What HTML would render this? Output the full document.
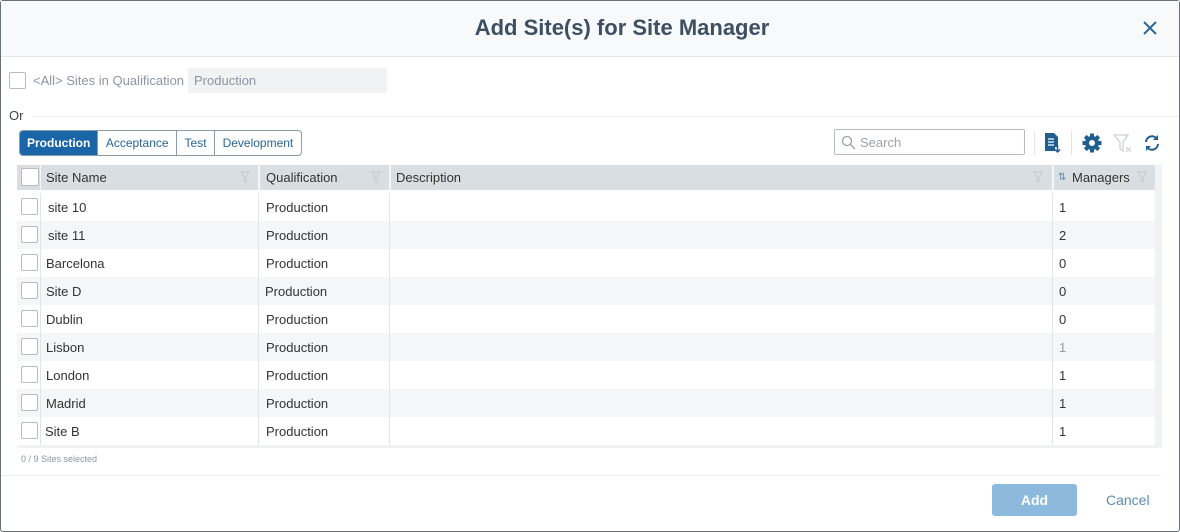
<!DOCTYPE html>
<html><head><meta charset="utf-8"><style>
*{box-sizing:border-box;margin:0;padding:0}
body{width:1180px;height:532px;overflow:hidden;background:#fff;font-family:"Liberation Sans",sans-serif;color:#333;position:relative}
.frame{position:absolute;left:0;top:0;width:1180px;height:532px;border:1px solid #6b7178;border-radius:3px}
.hdr{position:absolute;left:1px;top:1px;width:1178px;height:56px;background:#f7f9fa;border-bottom:1px solid #e6e9ec}
.title{position:absolute;left:0;width:1244px;top:15px;text-align:center;font-size:22px;font-weight:bold;color:#3d4f61}
.abs{position:absolute}
.cb{position:absolute;width:17px;height:17px;border:1px solid #b5bcc3;background:#fff;border-radius:2px}
.tabs{position:absolute;left:19px;top:130px;height:26px;border:1px solid #8a9ba9;border-radius:4px;display:flex;overflow:hidden;font-size:12px}
.tabs div{padding:0 7.5px;line-height:24px;color:#2a6496;border-left:1px solid #8a9ba9}
.tabs div:first-child{border-left:none;background:#1a65a8;color:#fff;font-weight:bold;padding:0 7px}
.th{position:absolute;top:165px;height:25px;background:#d9dee3;font-size:13px;color:#333;line-height:25px}
.row{position:absolute;left:17px;width:1138px;height:28px;font-size:13px;line-height:30px}
.row span{position:absolute}
.sep{position:absolute;width:1px;background:#e2e5e8}
</style></head><body>
<div class="frame"></div>
<div class="hdr"></div>
<div class="title">Add Site(s) for Site Manager</div>
<svg class="abs" style="left:1143px;top:21px" width="14" height="14"><path d="M1 1L13 13M13 1L1 13" stroke="#2d6a95" stroke-width="2"/></svg>

<div class="cb" style="left:9px;top:72px"></div>
<div class="abs" style="left:33px;top:73px;font-size:13px;color:#8a96a1">&lt;All&gt; Sites in Qualification</div>
<div class="abs" style="left:188px;top:68px;width:199px;height:25px;background:#f0f2f4;font-size:13px;color:#8a96a1;line-height:25px;padding-left:6px">Production</div>
<div class="abs" style="left:9px;top:108px;font-size:13px;color:#444">Or</div>
<div class="abs" style="left:32px;top:116px;width:1146px;height:1px;background:#eceff1"></div>

<div class="tabs"><div>Production</div><div>Acceptance</div><div>Test</div><div>Development</div></div>

<div class="abs" style="left:834px;top:129px;width:191px;height:26px;border:1px solid #b5bcc3;border-radius:2px;font-size:13px;color:#9aa3ab;line-height:25px;padding-left:25px">Search</div>
<svg class="abs" style="left:841px;top:135px" width="15" height="15"><circle cx="6" cy="6" r="4.5" fill="none" stroke="#9aa3ab" stroke-width="1.3"/><path d="M9.5 9.5L14 14" stroke="#9aa3ab" stroke-width="1.3"/></svg>
<div class="abs" style="left:1034px;top:131px;width:1px;height:24px;background:#e2e5e8"></div>
<svg class="abs" style="left:1043px;top:132px" width="18" height="22"><path d="M2 1h9l4 4v10h-3v4H2z" fill="#1f5f8f"/><path d="M5 7h6M5 10h6M5 13h6" stroke="#fff" stroke-width="1.3"/><path d="M14.5 13v7M12 17.5l2.5 2.5 2.5-2.5" stroke="#1f5f8f" stroke-width="1.5" fill="none"/></svg>
<div class="abs" style="left:1071px;top:131px;width:1px;height:24px;background:#e2e5e8"></div>
<svg class="abs" style="left:1082px;top:133px" width="20" height="20" viewBox="0 0 20 20"><g fill="#1f5f8f"><circle cx="10" cy="10" r="7"/><rect x="8" y="0.5" width="4" height="19"/><rect x="0.5" y="8" width="19" height="4"/><rect x="8" y="0.5" width="4" height="19" transform="rotate(45 10 10)"/><rect x="8" y="0.5" width="4" height="19" transform="rotate(-45 10 10)"/></g><circle cx="10" cy="10" r="3" fill="#fff"/></svg>
<svg class="abs" style="left:1113px;top:134px" width="20" height="20"><path d="M1 1h14l-5 7v9l-3-2V8z" fill="none" stroke="#ccd2d7" stroke-width="1.3"/><path d="M13 13l5 5M18 13l-5 5" stroke="#ccd2d7" stroke-width="1.2"/></svg>
<svg class="abs" style="left:1143px;top:134px" width="18" height="18"><path d="M3 8a6 6 0 0 1 11-3M15 10a6 6 0 0 1-11 3" fill="none" stroke="#1f5f8f" stroke-width="2"/><path d="M15 1v5h-5z" fill="#1f5f8f"/><path d="M3 17v-5h5z" fill="#1f5f8f"/></svg>

<div class="th" style="left:17px;width:1138px"></div>
<div class="abs" style="left:1155px;top:165px;width:7px;height:283px;background:#f0f2f4"></div>
<div class="cb" style="left:21px;top:168px;width:18px;height:18px"></div>
<div class="th" style="left:46px;background:none">Site Name</div>
<div class="th" style="left:266px;background:none">Qualification</div>
<div class="th" style="left:396px;background:none">Description</div>
<div class="th" style="left:1072px;background:none">Managers</div>
<div class="th" style="left:1058px;background:none;color:#5b8bb5;font-size:10px">⇅</div>
<div class="abs" style="left:40px;top:165px;width:1px;height:25px;background:#f5f6f7"></div>
<div class="abs" style="left:258px;top:165px;width:2px;height:25px;background:#f5f6f7"></div>
<div class="abs" style="left:389px;top:165px;width:2px;height:25px;background:#f5f6f7"></div>
<div class="abs" style="left:1052px;top:165px;width:2px;height:25px;background:#f5f6f7"></div>
<svg class="abs" style="left:240px;top:171px" width="10" height="12"><path d="M1 1h8L6 6v5L4 10V6z" fill="none" stroke="#c3c9ce"/></svg>
<svg class="abs" style="left:371px;top:171px" width="10" height="12"><path d="M1 1h8L6 6v5L4 10V6z" fill="none" stroke="#c3c9ce"/></svg>
<svg class="abs" style="left:1033px;top:171px" width="10" height="12"><path d="M1 1h8L6 6v5L4 10V6z" fill="none" stroke="#c3c9ce"/></svg>
<svg class="abs" style="left:1137px;top:171px" width="10" height="12"><path d="M1 1h8L6 6v5L4 10V6z" fill="none" stroke="#c3c9ce"/></svg>

<div class="row" style="top:193px"><span style="left:31px">site 10</span><span style="left:249px">Production</span><span style="left:1042px">1</span></div>
<div class="row" style="top:221px;background:#f5f6f7"><span style="left:31px">site 11</span><span style="left:249px">Production</span><span style="left:1042px">2</span></div>
<div class="row" style="top:249px"><span style="left:29px">Barcelona</span><span style="left:249px">Production</span><span style="left:1042px">0</span></div>
<div class="row" style="top:277px;background:#f5f6f7"><span style="left:29px">Site D</span><span style="left:248px">Production</span><span style="left:1042px">0</span></div>
<div class="row" style="top:305px"><span style="left:29px">Dublin</span><span style="left:249px">Production</span><span style="left:1042px">0</span></div>
<div class="row" style="top:333px;background:#f5f6f7"><span style="left:29px">Lisbon</span><span style="left:249px">Production</span><span style="left:1042px;color:#999">1</span></div>
<div class="row" style="top:361px"><span style="left:29px">London</span><span style="left:249px">Production</span><span style="left:1042px">1</span></div>
<div class="row" style="top:389px;background:#f5f6f7"><span style="left:29px">Madrid</span><span style="left:249px">Production</span><span style="left:1042px">1</span></div>
<div class="row" style="top:417px"><span style="left:28px">Site B</span><span style="left:249px">Production</span><span style="left:1042px">1</span></div>
<div class="abs" style="left:17px;top:445px;width:1138px;height:3px;background:#f0f2f4"></div>

<div class="sep" style="left:40px;top:193px;height:252px"></div>
<div class="sep" style="left:258px;top:193px;height:252px"></div>
<div class="sep" style="left:389px;top:193px;height:252px"></div>
<div class="sep" style="left:1052px;top:193px;height:252px"></div>

<div class="cb" style="left:21px;top:198px"></div>
<div class="cb" style="left:21px;top:226px"></div>
<div class="cb" style="left:21px;top:254px"></div>
<div class="cb" style="left:21px;top:282px"></div>
<div class="cb" style="left:21px;top:310px"></div>
<div class="cb" style="left:21px;top:338px"></div>
<div class="cb" style="left:21px;top:366px"></div>
<div class="cb" style="left:21px;top:394px"></div>
<div class="cb" style="left:21px;top:422px"></div>

<div class="abs" style="left:21px;top:454px;font-size:9px;color:#8a96a1">0 / 9 Sites selected</div>
<div class="abs" style="left:1px;top:475px;width:1160px;height:1px;background:#e9ecef"></div>
<div class="abs" style="left:992px;top:484px;width:85px;height:32px;background:#8db9dc;border-radius:3px;color:#fff;font-size:14px;font-weight:bold;text-align:center;line-height:32px">Add</div>
<div class="abs" style="left:1106px;top:492px;font-size:14px;color:#5b8bb5">Cancel</div>
</body></html>
